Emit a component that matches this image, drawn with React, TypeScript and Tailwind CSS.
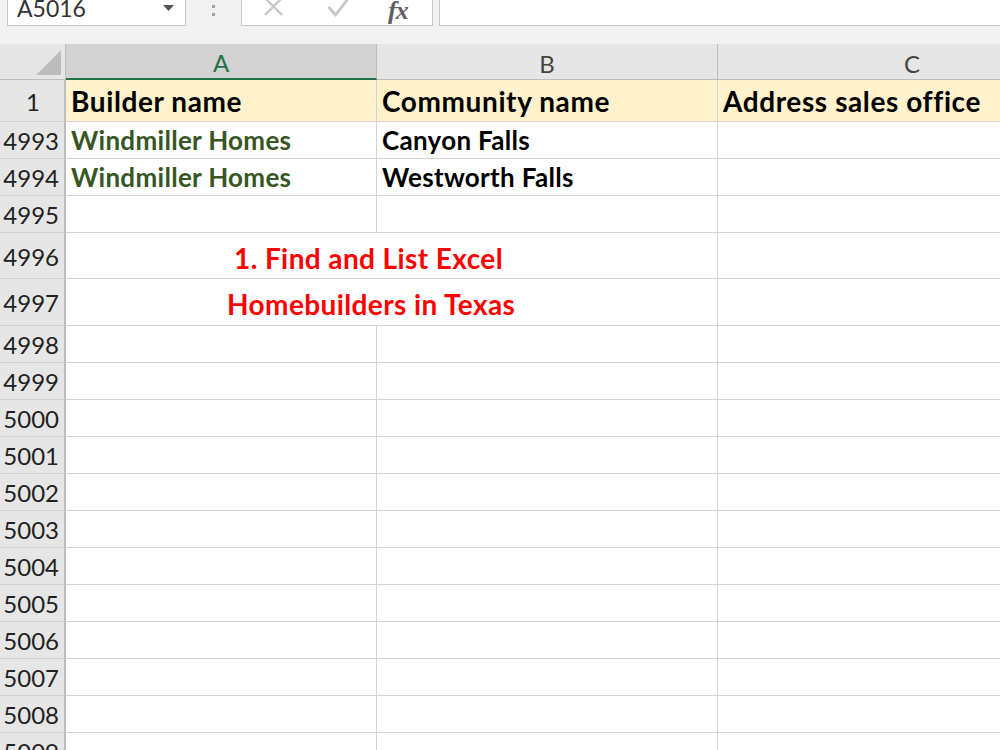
import React from 'react';

const font = "font-['Lato','Open_Sans',sans-serif]";

interface RowSpec {
  n: string;
  h: number;
  a?: string;
  b?: string;
  merged?: string;
  mergedPad?: number;
}

const rows: RowSpec[] = [
  { n: '4993', h: 37, a: 'Windmiller Homes', b: 'Canyon Falls' },
  { n: '4994', h: 37, a: 'Windmiller Homes', b: 'Westworth Falls' },
  { n: '4995', h: 37 },
  { n: '4996', h: 46, merged: '1. Find and List Excel', mergedPad: 168 },
  { n: '4997', h: 47, merged: 'Homebuilders in Texas', mergedPad: 161 },
  ...['4998', '4999', '5000', '5001', '5002', '5003', '5004', '5005', '5006', '5007', '5008', '5009'].map(
    (n) => ({ n, h: 37 })
  ),
];

const FormulaBar = () => (
  <div className="h-[44px] bg-[#f1f1f1] flex items-start">
    {/* Name box */}
    <div className="ml-[7px] w-[179px] h-[26px] bg-white border border-t-0 border-[#c6c6c6] flex items-end overflow-hidden relative">
      <span className="pl-[9px] text-[23px] leading-[23px] mb-[5px] text-[#333]">A5016</span>
      <svg className="absolute right-[11px] top-[5px]" width="11" height="6" viewBox="0 0 11 6">
        <path d="M0 0 L11 0 L5.5 6 Z" fill="#555" />
      </svg>
    </div>
    {/* Separator dots */}
    <div className="w-[55px] h-[26px] flex flex-col items-center justify-center gap-[5px] pb-[5px]">
      <div className="w-[3px] h-[3px] bg-[#a0a0a0]" />
      <div className="w-[3px] h-[3px] bg-[#a0a0a0]" />
    </div>
    {/* Cancel / enter / fx */}
    <div className="w-[192px] h-[26px] bg-white border border-t-0 border-[#c6c6c6] relative overflow-hidden">
      <svg className="absolute left-[21px] top-[-3px]" width="21" height="19" viewBox="0 0 21 19">
        <path d="M2 1 L19 18 M19 1 L2 18" stroke="#c8c8c8" strokeWidth="2.4" fill="none" />
      </svg>
      <svg className="absolute left-[85px] top-[-4px]" width="24" height="21" viewBox="0 0 24 21">
        <path d="M1.5 11 L8.5 19 L22.5 1" stroke="#c8c8c8" strokeWidth="2.8" fill="none" />
      </svg>
      <span className="absolute left-[146px] top-[-9px] font-['Liberation_Serif',serif] italic font-bold text-[26px] text-[#5f5f5f] tracking-[-1px]">
        fx
      </span>
    </div>
    <div className="ml-[6px] flex-1 h-[26px] bg-white border border-t-0 border-r-0 border-[#c6c6c6]" />
  </div>
);

const HeaderRow = () => (
  <div className="flex h-[36px]">
    <div className="w-[66px] shrink-0 bg-[#e6e6e6] border-r border-b border-[#bdbdbd] relative">
      <svg className="absolute left-[36px] top-[6px]" width="25" height="25" viewBox="0 0 25 25">
        <path d="M25 0 L25 25 L0 25 Z" fill="#bcbcbc" />
      </svg>
    </div>
    <div className="w-[311px] shrink-0 bg-[#d2d2d2] border-r border-[#bdbdbd] border-b-2 border-b-[#217346] flex items-center justify-center pt-[4px] text-[24px] text-[#217346]">
      A
    </div>
    <div className="w-[341px] shrink-0 bg-[#e6e6e6] border-r border-b border-[#bdbdbd] flex items-center justify-center pt-[4px] text-[24px] text-[#444]">
      B
    </div>
    <div className="w-[388px] shrink-0 bg-[#e6e6e6] border-b border-[#bdbdbd] flex items-center justify-center pt-[4px] text-[24px] text-[#444]">
      C
    </div>
  </div>
);

const RowHead = ({ n }: { n: string }) => (
  <div className="w-[66px] shrink-0 bg-[#e6e6e6] border-r-2 border-r-[#bdbdbd] border-b border-b-[#d0d0d0] flex items-center justify-end pr-[5px] pt-[2px] text-[24px] text-[#222]">
    {n}
  </div>
);

const head = 'bg-[#fff2cc] border-b border-[#d4d4d4] flex items-center pl-[5px] font-bold text-[28px] tracking-[0.6px] text-black whitespace-nowrap';
const data = 'border-b border-[#d4d4d4] flex items-center pl-[5px] font-bold text-[26px] tracking-[0.3px] whitespace-nowrap';

export default function App() {
  return (
    <div className={`w-[1000px] h-[750px] overflow-hidden bg-white ${font}`}>
      <FormulaBar />
      <HeaderRow />

      {/* Row 1: table header */}
      <div className="flex h-[42px]">
        <div className="w-[66px] shrink-0 bg-[#e6e6e6] border-r-2 border-r-[#bdbdbd] border-b border-b-[#d0d0d0] flex items-center justify-center pl-[2px] pt-[2px] text-[24px] text-[#222]">
          1
        </div>
        <div className={`w-[311px] shrink-0 border-r ${head}`}>Builder name</div>
        <div className={`w-[341px] shrink-0 border-r ${head}`}>Community name</div>
        <div className={`w-[388px] shrink-0 ${head}`}>Address sales office</div>
      </div>

      {rows.map((r) => (
        <div key={r.n} className="flex" style={{ height: r.h }}>
          <RowHead n={r.n} />
          {r.merged ? (
            <div
              className="w-[652px] shrink-0 border-r border-b border-[#d4d4d4] flex items-center pt-[4px] font-bold text-[28px] tracking-[0.4px] text-[#ff0000] whitespace-nowrap"
              style={{ paddingLeft: r.mergedPad }}
            >
              {r.merged}
            </div>
          ) : (
            <>
              <div className={`w-[311px] shrink-0 border-r text-[#375623] ${data}`}>{r.a}</div>
              <div className={`w-[341px] shrink-0 border-r text-black ${data}`}>{r.b}</div>
            </>
          )}
          <div className="w-[388px] shrink-0 border-b border-[#d4d4d4]" />
        </div>
      ))}
    </div>
  );
}
